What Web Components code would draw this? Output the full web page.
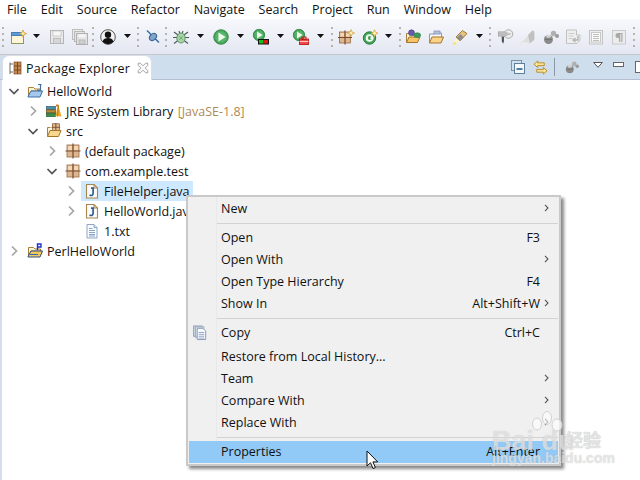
<!DOCTYPE html>
<html><head><meta charset="utf-8">
<style>
html,body{margin:0;padding:0;width:640px;height:480px;overflow:hidden;background:#fff;font-family:"Open Sans","Noto Sans",sans-serif;font-size:12.5px;color:#111}
</style></head><body>
<ide-window>
  <menu-bar>
    <menu-title>File</menu-title><menu-title>Edit</menu-title><menu-title>Source</menu-title><menu-title>Refactor</menu-title><menu-title>Navigate</menu-title><menu-title>Search</menu-title><menu-title>Project</menu-title><menu-title>Run</menu-title><menu-title>Window</menu-title><menu-title>Help</menu-title>
  </menu-bar>
  <tool-bar>
    <tb-grip style="margin-left:1px"></tb-grip>
    <tb-icon name="new" style="margin-left:6px"></tb-icon><tb-drop style="margin-left:7px"></tb-drop>
    <tb-icon name="save" style="margin-left:9px"></tb-icon><tb-icon name="saveall" style="margin-left:7px"></tb-icon>
    <tb-grip style="margin-left:3px"></tb-grip>
    <tb-icon name="person" style="margin-left:6px"></tb-icon><tb-drop style="margin-left:8px"></tb-drop>
    <tb-grip style="margin-left:5px"></tb-grip>
    <tb-icon name="pin" style="margin-left:7px"></tb-icon>
    <tb-grip style="margin-left:2px"></tb-grip>
    <tb-icon name="debug" style="margin-left:6px"></tb-icon><tb-drop style="margin-left:8px"></tb-drop>
    <tb-icon name="run" style="margin-left:9px"></tb-icon><tb-drop style="margin-left:8px"></tb-drop>
    <tb-icon name="runcov" style="margin-left:9px"></tb-icon><tb-drop style="margin-left:8px"></tb-drop>
    <tb-icon name="runext" style="margin-left:9px"></tb-icon><tb-drop style="margin-left:8px"></tb-drop>
    <tb-grip style="margin-left:6px"></tb-grip>
    <tb-icon name="newpkg" style="margin-left:5px"></tb-icon>
    <tb-icon name="newclass" style="margin-left:8px"></tb-icon><tb-drop style="margin-left:7px"></tb-drop>
    <tb-grip style="margin-left:6px"></tb-grip>
    <tb-icon name="openproj" style="margin-left:4px"></tb-icon>
    <tb-icon name="openfolder" style="margin-left:7px"></tb-icon>
    <tb-icon name="pen" style="margin-left:8px"></tb-icon><tb-drop style="margin-left:8px"></tb-drop>
    <tb-grip style="margin-left:5px"></tb-grip>
    <tb-icon name="tip" style="margin-left:6px"></tb-icon>
    <tb-icon name="mark" style="margin-left:6px"></tb-icon>
    <tb-icon name="bubbles" style="margin-left:8px"></tb-icon>
    <tb-icon name="docarrow" style="margin-left:6px"></tb-icon>
    <tb-icon name="listdoc" style="margin-left:7px"></tb-icon>
    <tb-icon name="para" style="margin-left:7px"></tb-icon>
    <tb-grip style="margin-left:5px"></tb-grip>
  </tool-bar>
  <view-tabs label="Package Explorer"></view-tabs>
  <tree-view>
    <tree-row level="0" chev="open" icon="javaproj">HelloWorld</tree-row>
    <tree-row level="1" chev="closed" icon="library">JRE System Library <tree-deco>[JavaSE-1.8]</tree-deco></tree-row>
    <tree-row level="1" chev="open" icon="srcfolder">src</tree-row>
    <tree-row level="2" chev="closed" icon="package">(default package)</tree-row>
    <tree-row level="2" chev="open" icon="package">com.example.test</tree-row>
    <tree-row level="3" chev="closed" icon="java" selected>FileHelper.java</tree-row>
    <tree-row level="3" chev="closed" icon="java">HelloWorld.java</tree-row>
    <tree-row level="3" icon="txt">1.txt</tree-row>
    <tree-row level="0" chev="closed" icon="perlproj">PerlHelloWorld</tree-row>
  </tree-view>
  <context-menu>
    <menu-item arrow>New</menu-item>
    <menu-sep></menu-sep>
    <menu-item shortcut="F3">Open</menu-item>
    <menu-item arrow>Open With</menu-item>
    <menu-item shortcut="F4">Open Type Hierarchy</menu-item>
    <menu-item shortcut="Alt+Shift+W" arrow>Show In</menu-item>
    <menu-sep></menu-sep>
    <menu-item shortcut="Ctrl+C" icon="copy" tall>Copy</menu-item>
    <menu-item>Restore from Local History...</menu-item>
    <menu-item arrow>Team</menu-item>
    <menu-item arrow>Compare With</menu-item>
    <menu-item arrow>Replace With</menu-item>
    <menu-sep></menu-sep>
    <menu-item shortcut="Alt+Enter" active>Properties</menu-item>
  </context-menu>
  <mouse-cursor></mouse-cursor>
  <baidu-mark></baidu-mark>
</ide-window>
<script>
const star=(x,y)=>`<path d="M${x} ${y-3.5}l1 2.5 2.5 1-2.5 1-1 2.5-1-2.5-2.5-1 2.5-1z" fill="#fdf3c0" stroke="#d8a53a" stroke-width=".8"/>`;
const pkg=(x=2,y=2,s=12)=>{const t=s/2;return `<rect x="${x}" y="${y}" width="${s}" height="${s}" fill="#dcb68e" stroke="#9a6c48" stroke-width=".8"/><path d="M${x+t} ${y-1.5}V${y+s+1.5}M${x-1.5} ${y+t}H${x+s+1.5}" stroke="#7a4a2e" stroke-width="1.2"/><path d="M${x+1} ${y+1}h${t-2}v${t-2}h-${t-2}z" fill="#f3d8b6"/><path d="M${x+t+1} ${y+1}h${t-2}v${t-2}h-${t-2}z" fill="#f3d8b6"/>`};
const folder=(f2='#f4c568')=>`<path d="M1.5 13.5V4.5h5l1.5 1.5h5.5v2" fill="#fdf4d2" stroke="#a8823c"/><path d="M1.5 13.5L4 8h11l-2.5 5.5z" fill="${f2}" stroke="#a5762a"/>`;
const playBall=(cx,cy,r)=>`<circle cx="${cx}" cy="${cy}" r="${r}" fill="#46a35a" stroke="#2c7d3f" stroke-width=".8"/><circle cx="${cx}" cy="${cy}" r="${r-1.5}" fill="#56b56a"/><path d="M${cx-r*.35} ${cy-r*.6}L${cx+r*.65} ${cy}L${cx-r*.35} ${cy+r*.6}z" fill="#eef8e6"/>`;
const ICONS={
 new:`<rect x="1.5" y="3.5" width="12" height="11" fill="#fdf6d8" stroke="#8a9a5a"/><rect x="1.5" y="3.5" width="12" height="3" fill="#5d9bd8" stroke="#4a7fb5"/><path d="M13 1l1 2.6 2.6 1-2.6 1-1 2.6-1-2.6-2.6-1 2.6-1z" fill="#fdf0b0" stroke="#d49a2a" stroke-width=".8"/>`,
 save:`<rect x="1.5" y="1.5" width="13" height="13" fill="#e8e8e8" stroke="#b4b4b4"/><rect x="4" y="2" width="8" height="5" fill="#f6f6f6" stroke="#c0c0c0" stroke-width=".7"/><rect x="4.5" y="9.5" width="7" height="5" fill="#d6d6d6" stroke="#b4b4b4" stroke-width=".8"/>`,
 saveall:`<rect x=".5" y=".5" width="10" height="10" fill="#ececec" stroke="#bdbdbd"/><rect x="2.5" y="2.5" width="10" height="10" fill="#e6e6e6" stroke="#b8b8b8"/><rect x="4.5" y="4.5" width="11" height="11" fill="#e2e2e2" stroke="#b0b0b0"/><rect x="7" y="11" width="6" height="4" fill="#cfcfcf" stroke="#b0b0b0" stroke-width=".7"/><rect x="6.5" y="5" width="7" height="3.5" fill="#f4f4f4"/>`,
 person:`<circle cx="8" cy="8" r="7.3" fill="#f2f2f2" stroke="#555" stroke-width="1"/><circle cx="8" cy="5.8" r="3.2" fill="#111"/><path d="M2.6 12.6C3.4 9.6 5.4 9 8 9s4.6.6 5.4 3.6A7 7 0 0 1 2.6 12.6z" fill="#111"/>`,
 pin:`<path d="M1 1.5L13 13.5" stroke="#3b6ea5" stroke-width="1.5"/><ellipse cx="7" cy="8" rx="4" ry="3" fill="#7fa5cc" stroke="#34608f" stroke-width="1" transform="rotate(-45 7 8)"/>`,
 debug:`<path d="M1 3l4 3M15 3l-4 3M0 8.5h4M16 8.5h-4M1 14.5l4-3M15 14.5l-4-3M6 2l1 3M10 2L9 5" stroke="#4a5a50" stroke-width="1.1"/><ellipse cx="8" cy="9" rx="4.2" ry="5" fill="#a8d6a0" stroke="#5f8f72"/><path d="M6 7l4 4M10 7l-4 4" stroke="#6aa17c" stroke-width=".8"/>`,
 run:playBall(8,8,7.3),
 runcov:playBall(6,6,5.7)+`<rect x="5" y="10" width="11" height="5.5" fill="#111"/><rect x="6" y="11" width="4.5" height="3.5" fill="#16c01e"/><rect x="10.5" y="11" width="4.5" height="3.5" fill="#d81818"/>`,
 runext:playBall(6,6,5.7)+`<rect x="6.5" y="10" width="9" height="5.5" fill="#f04a4a" stroke="#c01818" stroke-width=".9"/><rect x="9" y="8" width="4" height="2.5" fill="none" stroke="#c01818"/><path d="M6.5 12.5h9" stroke="#fff" stroke-width=".7"/>`,
 newpkg:pkg(1.5,3,11)+star(13,4),
 newclass:`<circle cx="7.5" cy="9" r="6.2" fill="#43a35a" stroke="#2c7d3f"/><circle cx="7.5" cy="9" r="3.8" fill="#f6fbf2"/><circle cx="7.8" cy="9" r="2" fill="#43a35a"/><rect x="8.5" y="7.8" width="3" height="2.4" fill="#f6fbf2"/>`+star(12.5,4.2),
 openproj:folder()+`<circle cx="6.5" cy="3.8" r="3" fill="#6a58a8" stroke="#4d3d85" stroke-width=".6"/><ellipse cx="12.2" cy="6.2" rx="3.4" ry="2.4" fill="#3e9a60" stroke="#2c7d3f" stroke-width=".6"/>`,
 openfolder:`<path d="M1.5 13.5V5h5V4h7v5" fill="#f4f4f4" stroke="#8a9ab5"/><rect x="6" y="2" width="6" height="3" fill="#b8c2de" stroke="#7a8ab0" stroke-width=".7"/><path d="M1.5 14L4 8h11.5L13 14z" fill="#f9d488" stroke="#a5762a"/>`,
 pen:`<path d="M1 15.5l3-7 3.5 3.5z" fill="#fff6c4"/><path d="M4 8l6.5-6.5 4.5 3-6.5 7z" fill="#e8c47a" stroke="#8a6a2a" stroke-width=".8"/><path d="M4.5 9l4-4 3 3-4 4z" fill="#8d8d8d"/><path d="M1 15.5l3-2" stroke="#f8e070" stroke-width="2"/>`,
 tip:`<path d="M1 2.5h10.5v5H8l-1 1V15L4.5 12V7.5H1z" fill="#9c9c9c"/><path d="M5 8v6l2-1.5V8z" fill="#555"/><circle cx="11.5" cy="5" r="4.3" fill="#ececec" stroke="#aaa"/><path d="M9.5 5h4" stroke="#999"/><path d="M1.5 3h9v4h-9z" fill="#bcbcbc"/>`,
 mark:`<path d="M3 13.5L13.5 1.5l1.8 1v9L10 15H0z" fill="#dedede"/><path d="M9 6l4.5-4.5 1.8 1V10.5L11 14z" fill="#c0c0c0"/><path d="M1 15l4-2 5 .5L9.5 15z" fill="#ececec"/>`,
 bubbles:`<circle cx="5.5" cy="10.5" r="4.5" fill="#8a8a8a"/><ellipse cx="5.5" cy="7.3" rx="2.6" ry="1.5" fill="#d4d4d4"/><circle cx="10.5" cy="4.5" r="2.7" fill="#b0b0b0"/><circle cx="14" cy="7" r="2" fill="#9a9a9a"/><path d="M2 10.5h7" stroke="#707070" stroke-width=".8"/>`,
 docarrow:`<path d="M1.5 1h10v5H15v5l-3 3.5H1.5z" fill="#eee" stroke="#c2c2c2"/><path d="M3.5 4.5h6M3.5 7h5M3.5 9.5h4" stroke="#cdcdcd"/><path d="M13 7v4H8.5M10.5 9l-2.5 2 2.5 2" fill="none" stroke="#b4b4b4" stroke-width="1.4"/>`,
 listdoc:`<rect x="1.5" y="1.5" width="13" height="13.5" fill="#ededed" stroke="#c4c4c4"/><rect x="3.5" y="3.5" width="9" height="9.5" fill="#fafafa" stroke="#c8c8c8"/><path d="M5 5.5h6M5 7.5h6M5 9.5h6M5 11.5h6" stroke="#bdbdbd"/>`,
 para:`<rect x="1.5" y="1.5" width="13" height="13.5" fill="#ececec" stroke="#cacaca"/><path d="M11.5 4H7a2.5 2.5 0 0 0 0 5h1v4h1.3V5h1v8H11.5V4z" fill="#a8a8a8"/>`,
 javaproj:folder()+`<path d="M11 1.5h3.5M13.5 1.5v4.5a1.6 1.6 0 0 1-3 .6" fill="none" stroke="#3b6ea5" stroke-width="1.2"/><path d="M1 13.5L4 8h11.5L13 14H1z" fill="#a6c8ec" stroke="#3c6fa8"/>`,
 perlproj:folder()+`<path d="M10.5 7V1h3.5v3h-3" fill="#fff" stroke="#1e33c4" stroke-width="1.4"/><path d="M1 13.5L4 8h11.5L13 14H1z" fill="#f3c85a" stroke="#2d4f8e"/><path d="M3 11.5h8" stroke="#2d6ab0"/>`,
 library:`<rect x=".5" y="3.5" width="9" height="3" fill="#4a8fa8" stroke="#2a5f7a" stroke-width=".7"/><rect x=".5" y="6.8" width="9" height="3" fill="#b88a3a" stroke="#6a4a1a" stroke-width=".7"/><rect x=".5" y="10.2" width="9" height="3.3" fill="#3d8a4a" stroke="#1f5a2a" stroke-width=".7"/><path d="M9.5 13L12 1l3.5 12.5" fill="#eda72a"/><path d="M11.5 13.5L12.5 2" stroke="#b87a14"/><rect x="10" y="1.5" width="2" height="2" fill="#d8782a"/>`,
 srcfolder:`<path d="M1.5 13.5V4.5h3" fill="#fdf4d2" stroke="#a8823c"/><g transform="translate(4 0) scale(.78)"><rect x="3" y="1" width="9" height="9" fill="#e0bd92" stroke="#8a5a3a"/><path d="M7.5 0v11M2 5.5h11" stroke="#7a4a2e" stroke-width="1.2"/></g><path d="M1.5 13.5L4 7.5h11L12.5 13.5z" fill="#f9d78c" stroke="#a5762a"/>`,
 package:pkg(2,2,12),
 java:`<path d="M2.5 1.5h7.5l3.5 3.5v10H2.5z" fill="#fbfbfb" stroke="#a78650" stroke-width="1.1"/><path d="M10 1.5V5h3.5" fill="none" stroke="#a78650"/><path d="M5.5 12c1.8 1 3.6.4 3.6-1.4V5.2H7" fill="none" stroke="#2f5d94" stroke-width="1.7"/>`,
 txt:`<path d="M3 1.5h7l3 3v10.5H3z" fill="#f8fbff" stroke="#8ea6c6"/><path d="M10 1.5v3h3" fill="#dce6f4" stroke="#8ea6c6"/><path d="M5 5.5h3.5M5 7.5h6M5 9.5h6M5 11.5h6M5 13h6" stroke="#7f9ac0" stroke-width=".9"/>`,
 outline:`<path d="M2 1.5V13M2 3h3M2 11h3" fill="none" stroke="#6f6a66"/><rect x="6" y="1" width="7" height="12" fill="#c58a50" stroke="#7a4a2e" stroke-width=".7"/><path d="M6 5h7M6 9h7M9.5 1v12" stroke="#6d4226" stroke-width=".9"/>`,
 close:`<path d="M2.5 2.5h2.5L8 5.5l3-3h2.5v2.5l-3 3 3 3v2.5H11l-3-3-3 3H2.5V11l3-3-3-3z" fill="#f8f8f8" stroke="#999" stroke-width="1"/>`,
 collapse:`<rect x=".5" y=".5" width="10" height="10" fill="#cfe0ee" stroke="#7d93a8"/><rect x="3.5" y="3.5" width="10" height="10" fill="#f4f8fb" stroke="#5d7f9c"/><path d="M5.5 9h6" stroke="#2b5f8f" stroke-width="1.6"/>`,
 link:`<path d="M1 4.5L5 1v2h7v3H5v2z" fill="#fbe59a" stroke="#b98a24"/><path d="M15 11.5L11 15v-2H4v-3h7V8z" fill="#fbe59a" stroke="#b98a24"/>`,
 copy:`<rect x=".5" y="1" width="9" height="11" fill="#cfdbe9" stroke="#93a5bb"/><rect x="2.5" y="2" width="9" height="11" fill="#dfe7f1" stroke="#93a5bb"/><path d="M4.5 3.5h6l3 3v9h-9z" fill="#fbfcfe" stroke="#8298b4"/><path d="M6 8h6M6 10h6M6 12h6M6 14h6" stroke="#7f9ac0" stroke-width=".9"/>`
};
function svg(name,w=16,vb=16){return `<svg xmlns="http://www.w3.org/2000/svg" width="${w}" height="${w}" viewBox="0 0 ${vb} ${vb}" style="display:block;overflow:visible">${ICONS[name]||''}</svg>`}
function def(tag,css,html){customElements.define(tag,class extends HTMLElement{
  constructor(){super();this.attachShadow({mode:'open'})}
  connectedCallback(){const h=typeof html==='function'?html(this):html;this.shadowRoot.innerHTML=`<style>${css}</style>${h}`}
})}
def('ide-window',':host{display:block;position:relative;width:640px;height:480px;overflow:hidden;background:#fff}','<slot></slot>');
def('menu-bar',':host{display:flex;height:19px;align-items:center;background:#fff;padding-left:7px;gap:13.9px;white-space:nowrap}','<slot></slot>');
def('menu-title',':host{display:block;line-height:19px;font-size:12.5px;color:#111}','<slot></slot>');
def('tool-bar',':host{display:flex;align-items:center;height:35px;background:linear-gradient(#f7f8fc,#e4e7f2);border-bottom:1px solid #c6c6ca}','<slot></slot>');
def('tb-icon',':host{display:block;flex:none;width:16px;height:16px}',e=>svg(e.getAttribute('name')));
def('tb-drop',':host{display:block;flex:none;width:7px;height:4px;margin-top:-1px}','<svg width="7" height="4" viewBox="0 0 7 4" style="display:block"><path d="M0 0h7L3.5 4z" fill="#111"/></svg>');
def('tb-grip',':host{display:flex;flex:none;flex-direction:column;gap:4px;width:3px;align-items:center}i{display:block;width:2px;height:2px;background:#b5b5ac}','<i></i><i></i><i></i><i></i>');
def('view-tabs',`:host{display:flex;align-items:stretch;height:24px;background:#cfdeec;border-bottom:1px solid #b5bed2;padding-left:2px}
 .tab{display:flex;flex:none;align-items:center;width:150px;height:25px;box-sizing:border-box;background:#fff;border-radius:7px 7px 0 0;border:1px solid #d8dde8;border-bottom:none;padding-left:5px;font-size:12.5px;color:#111;margin-bottom:-1px}
 .lbl{margin-left:4px;white-space:nowrap;letter-spacing:.02em}.x{margin-left:6px}
 .tools{flex:1;display:flex;align-items:center;padding-left:359px}
 .tools>*{flex:none}.sep{width:1px;height:18px;background:#8b97a6;margin-left:6px}
 .tri{margin-left:14px;margin-top:-5px}
 .min{width:9px;height:3px;background:#fff;border:1px solid #666;margin-left:10px;margin-top:-5px}
 .max{width:10px;height:10px;background:#fff;border:1px solid #666;margin-left:11px}`,
 e=>`<div class="tab">${svg('outline',14,14)}<span class="lbl">${e.getAttribute('label')}</span><span class="x">${svg('close',14,16)}</span></div>
 <div class="tools"><span>${svg('collapse',14,14)}</span><span style="margin-left:8px">${svg('link',15,16)}</span><span class="sep"></span><span style="margin-left:10px">${svg('bubbles',14,16)}</span><span class="tri"><svg width="10" height="6" viewBox="0 0 10 6" style="display:block"><path d="M.7.5h8.6L5 5.3z" fill="#fff" stroke="#555"/></svg></span><span class="min"></span><span class="max"></span></div>`);
def('tree-view',':host{display:block;padding-top:1px;border-left:2px solid #d3dfec;height:400px;box-sizing:border-box}','<slot></slot>');
def('tree-row',`:host{display:flex;align-items:center;height:20px;white-space:nowrap;font-size:12.5px;color:#111;margin-left:-2px}
 .c{flex:none;width:11px;height:12px;margin-right:5px}
 .h{display:flex;align-items:center;padding:0 3px;height:20px}
 :host([selected]) .h{background:#cde8ff}
 .i{flex:none;width:16px;height:16px;margin-right:4px}`,
 e=>{const l=+e.getAttribute('level');const ch=e.getAttribute('chev');
 const p=ch==='open'?'M1.5 4l4.5 4.5L10.5 4':ch==='closed'?'M4 1.5L8.5 6 4 10.5':'';
 return `<style>:host{padding-left:${8+19*l}px}</style><span class="c"><svg width="11" height="12" viewBox="0 0 11 12" style="display:block">${p?`<path d="${p}" fill="none" stroke="${ch==='open'?'#555':'#a6a6a6'}" stroke-width="1.7"/>`:''}</svg></span><span class="h"><span class="i">${svg(e.getAttribute('icon'))}</span><span><slot></slot></span></span>`});
def('tree-deco',':host{color:#b08a58;margin-left:1px}','<slot></slot>');
def('context-menu',`:host{display:block;position:absolute;left:186px;top:195px;width:375px;height:271px;box-sizing:border-box;background:linear-gradient(90deg,#f0f0f0 28px,#e9e9e9 28px,#e9e9e9 29px,#f0f0f0 29px);border:2px solid #c9c9c9;padding:1px;box-shadow:3px 3px 3px #8a8a8a;font-size:12.5px}`,'<slot></slot>');
def('menu-sep',':host{display:block;height:7px;position:relative}:host::after{content:"";position:absolute;left:28px;right:0;top:3px;height:1px;background:#d2d2d2}','');
def('menu-item',`:host{display:flex;align-items:center;height:22px;box-sizing:border-box;padding:0 0 2px 32px;position:relative;color:#111;white-space:nowrap}
 :host([tall]){height:24px;padding-bottom:4px}:host([active]){background:#91c9f7}
 .s{margin-left:auto}.a{flex:none;width:18px;display:flex;justify-content:flex-end;padding-right:9px;box-sizing:border-box}
 .ic{position:absolute;left:4px;top:3px}`,
 e=>`${e.getAttribute('icon')?`<span class="ic">${svg(e.getAttribute('icon'),15,16)}</span>`:''}<slot></slot><span class="s">${e.getAttribute('shortcut')||''}</span><span class="a">${e.hasAttribute('arrow')?`<svg width="5" height="8" viewBox="0 0 5 8" style="display:block"><path d="M1 .8L4 4 1 7.2" fill="none" stroke="#555" stroke-width="1.1"/></svg>`:''}</span>`);
def('mouse-cursor',':host{position:absolute;left:365.5px;top:449.5px;display:block;width:14px;height:20px}',`<svg width="14" height="20" viewBox="0 0 14 20" style="display:block"><path d="M1 1v15l3.5-3.2 2.5 5.7 2.4-1-2.5-5.6h4.8z" fill="#fff" stroke="#111" stroke-width="1"/></svg>`);
def('baidu-mark',`:host{position:absolute;left:490px;top:410px;width:125px;height:60px;display:block;pointer-events:none;font-family:"Liberation Sans",sans-serif;color:rgba(255,255,255,.5)}
 .b{position:absolute;left:2px;top:17px;font-size:27px;font-weight:bold;line-height:28px;text-shadow:0 0 1px rgba(170,170,170,.7)}
 .j{position:absolute;left:75px;top:19px;font:bold 18px "Noto Sans CJK SC",sans-serif;line-height:20px;color:#e4e4e4;text-shadow:0 0 1px #bbb}
 .u{position:absolute;left:2px;top:40px;font-size:14px;font-weight:bold;line-height:16px;text-shadow:0 0 1px rgba(170,170,170,.7)}
 svg{position:absolute;left:36px;top:0}`,
 `<svg width="40" height="42" viewBox="0 0 40 42"><g fill="rgba(255,255,255,.6)" stroke="#d2d2d2" stroke-width="1"><ellipse cx="11" cy="14" rx="4.5" ry="6"/><ellipse cx="21" cy="8" rx="4.5" ry="6.5"/><ellipse cx="31" cy="15" rx="5" ry="6"/></g></svg><span class="b">Bai du</span><span class="j">经验</span><span class="u">jingyan.baidu.com</span>`);
</script>
</body></html>
